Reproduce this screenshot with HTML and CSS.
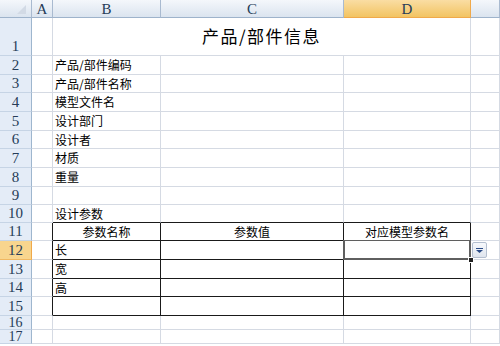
FILE: index.html
```html
<!DOCTYPE html>
<html lang="zh-CN">
<head>
    <meta charset="UTF-8">
    <title>产品/部件信息</title>
    <link rel="stylesheet" href="styles.css">
</head>
<body>
    <div class="sheet">
        <!-- column headers -->
        <div class="row head">
            <div class="corner"><span class="tri"></span></div>
            <div class="ch">A</div>
            <div class="ch">B</div>
            <div class="ch">C</div>
            <div class="ch active">D</div>
            <div class="ch"></div>
        </div>

        <div class="row tall">
            <div class="rh">1</div>
            <div></div>
            <div class="title">产品/部件信息</div>
            <div></div>
        </div>
        <div class="row">
            <div class="rh">2</div><div></div><div>产品/部件编码</div><div></div><div></div><div></div>
        </div>
        <div class="row s">
            <div class="rh">3</div><div></div><div>产品/部件名称</div><div></div><div></div><div></div>
        </div>
        <div class="row">
            <div class="rh">4</div><div></div><div>模型文件名</div><div></div><div></div><div></div>
        </div>
        <div class="row">
            <div class="rh">5</div><div></div><div>设计部门</div><div></div><div></div><div></div>
        </div>
        <div class="row s">
            <div class="rh">6</div><div></div><div>设计者</div><div></div><div></div><div></div>
        </div>
        <div class="row">
            <div class="rh">7</div><div></div><div>材质</div><div></div><div></div><div></div>
        </div>
        <div class="row">
            <div class="rh">8</div><div></div><div>重量</div><div></div><div></div><div></div>
        </div>
        <div class="row s">
            <div class="rh">9</div><div></div><div></div><div></div><div></div><div></div>
        </div>
        <div class="row s">
            <div class="rh">10</div><div></div>
            <div class="above">设计参数</div><div class="above"></div><div class="above"></div><div></div>
        </div>

        <!-- parameter table -->
        <div class="row s">
            <div class="rh">11</div><div class="left"></div>
            <div class="t center">参数名称</div><div class="t center">参数值</div><div class="t center">对应模型参数名</div><div></div>
        </div>
        <div class="row">
            <div class="rh active">12</div><div class="left"></div>
            <div class="t">长</div><div class="t"></div>
            <div class="t selected">
                <span class="handle"></span>
                <span class="dropdown">
                    <svg width="7" height="5" viewBox="0 0 7 5"><rect x="0" y="0" width="7" height="1" fill="#2a4a86"/><path d="M0 2h7L3.5 5z" fill="#2a4a86"/></svg>
                </span>
            </div>
            <div></div>
        </div>
        <div class="row">
            <div class="rh">13</div><div class="left"></div>
            <div class="t">宽</div><div class="t"></div><div class="t"></div><div></div>
        </div>
        <div class="row s">
            <div class="rh">14</div><div class="left"></div>
            <div class="t">高</div><div class="t"></div><div class="t"></div><div></div>
        </div>
        <div class="row">
            <div class="rh">15</div><div class="left"></div>
            <div class="t"></div><div class="t"></div><div class="t"></div><div></div>
        </div>

        <div class="row xs">
            <div class="rh">16</div><div></div><div></div><div></div><div></div><div></div>
        </div>
        <div class="row xs">
            <div class="rh">17</div><div></div><div></div><div></div><div></div><div></div>
        </div>
    </div>
</body>
</html>
```

FILE: styles.css
```css
/* Spreadsheet look */
body {
    margin: 0;
    padding: 0;
    background-color: #fff;
    font-family: "Noto Sans CJK SC", sans-serif;
    color: #000;
}

.sheet {
    width: 500px;
    overflow: hidden;
}

.row {
    display: grid;
    grid-template-columns: 32px 21px 108px 183px 127px 1fr;
    height: 19px;
}

.row.s {
    height: 18px;
}

.row.xs {
    height: 14px;
}

.row.tall {
    height: 38px;
}

.row.head {
    height: 18px;
}

.row > div {
    box-sizing: border-box;
    min-width: 0;
    display: flex;
    align-items: center;
    padding-left: 2px;
    border-right: 1px solid #d5dae3;
    border-bottom: 1px solid #d5dae3;
    font-size: 12px;
    line-height: 14px;
    white-space: nowrap;
}

/* Headers */
.row > .ch,
.row > .corner {
    justify-content: center;
    padding: 0;
    background: linear-gradient(#f4f7fb, #dbe4ef);
    border-right: 1px solid #a9bad0;
    border-bottom: 1px solid #9eb3cb;
    font-family: "Liberation Serif", serif;
    font-size: 15px;
    color: #263c58;
}

.row > .corner {
    justify-content: flex-end;
    align-items: flex-end;
    padding: 0 5px 3px 0;
}

.tri {
    width: 0;
    height: 0;
    border-left: 9px solid transparent;
    border-bottom: 9px solid #d2dae5;
}

.row > .rh {
    justify-content: center;
    align-items: flex-end;
    padding: 0 0 1px;
    background-color: #e4ecf7;
    border-right: 1px solid #9eb6ce;
    border-bottom: 1px solid #c6d4e5;
    font-family: "Liberation Serif", serif;
    font-size: 15px;
    line-height: 16px;
    color: #263c58;
}

.row.xs > .rh {
    line-height: 13px;
    font-size: 14px;
    padding: 0;
}

.row > .ch.active {
    background: linear-gradient(#fadda3, #f2c462);
    border-right-color: #f0a94a;
    border-bottom-color: #f0a94a;
}

.row > .rh.active {
    background-color: #f8d58e;
    border-bottom-color: #f0b862;
    border-right-color: #f0a94a;
}

/* Cells */
.row > .title {
    grid-column: span 3;
    justify-content: center;
    font-size: 17px;
    letter-spacing: 1.5px;
    padding: 0 0 2px;
}

.row > .center {
    justify-content: center;
    padding: 0;
}

.row > .above {
    border-bottom-color: #1a1a1a;
}

.row > .left {
    border-right-color: #1a1a1a;
}

.row > .t {
    border-right-color: #1a1a1a;
    border-bottom-color: #1a1a1a;
}

/* Active cell with list validation */
.row > .selected {
    position: relative;
}

.selected::after {
    content: "";
    position: absolute;
    left: -1px;
    top: -1px;
    right: -1px;
    bottom: -1px;
    border: 2px solid #5f5f5f;
    border-top-width: 1px;
}

.handle {
    position: absolute;
    right: -4px;
    bottom: -4px;
    width: 4px;
    height: 4px;
    background-color: #222;
    border: 1px solid #fff;
    z-index: 2;
}

.dropdown {
    position: absolute;
    left: 128px;
    top: 1px;
    width: 15px;
    height: 16px;
    box-sizing: border-box;
    display: flex;
    align-items: center;
    justify-content: center;
    background: linear-gradient(#f7f9fc, #dfe5ee);
    border: 1px solid #b4bfcf;
    border-radius: 2px;
    z-index: 2;
}
```
